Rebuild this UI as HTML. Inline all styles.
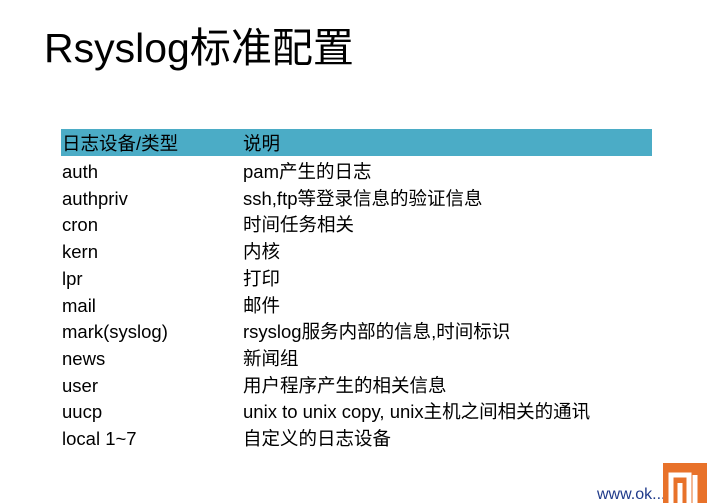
<!DOCTYPE html>
<html><head><meta charset="utf-8"><style>
body{margin:0;width:720px;height:500px;background:#fff;position:relative;overflow:hidden;font-family:"Liberation Sans","Noto Sans CJK SC",sans-serif;color:#000}
.t{position:absolute;left:44px;top:22px;font-size:41px;line-height:52px}
.hdr{position:absolute;left:61px;top:129px;width:591px;height:27px;background:#4bacc6}
.r{position:absolute;left:62px;font-size:18.5px;line-height:27px;white-space:nowrap}
.c{position:absolute;left:243px;font-size:18.5px;line-height:27px;white-space:nowrap}
</style></head><body>
<div class="t">Rsyslog标准配置</div>
<div class="hdr"></div>
<div class="r" style="top:130px">日志设备/类型</div><div class="c" style="top:130px">说明</div>
<div class="r" style="top:158px">auth</div><div class="c" style="top:158px">pam产生的日志</div>
<div class="r" style="top:185px">authpriv</div><div class="c" style="top:185px">ssh,ftp等登录信息的验证信息</div>
<div class="r" style="top:211px">cron</div><div class="c" style="top:211px">时间任务相关</div>
<div class="r" style="top:238px">kern</div><div class="c" style="top:238px">内核</div>
<div class="r" style="top:265px">lpr</div><div class="c" style="top:265px">打印</div>
<div class="r" style="top:292px">mail</div><div class="c" style="top:292px">邮件</div>
<div class="r" style="top:318px">mark(syslog)</div><div class="c" style="top:318px">rsyslog服务内部的信息,时间标识</div>
<div class="r" style="top:345px">news</div><div class="c" style="top:345px">新闻组</div>
<div class="r" style="top:372px">user</div><div class="c" style="top:372px">用户程序产生的相关信息</div>
<div class="r" style="top:398px">uucp</div><div class="c" style="top:398px">unix to unix copy, unix主机之间相关的通讯</div>
<div class="r" style="top:425px">local 1~7</div><div class="c" style="top:425px">自定义的日志设备</div>
<div style="position:absolute;left:597px;top:486px;font-size:16px;color:#1f3a8a;white-space:nowrap">www.ok...</div>
<div style="position:absolute;left:663px;top:463px;width:44px;height:40px;background:#e8722a"></div>
<svg style="position:absolute;left:663px;top:463px" width="44" height="40"><path d="M8 40V12h18v28M17 20v20M32 12v28" stroke="#fff" stroke-width="5" fill="none"/></svg>
</body></html>
